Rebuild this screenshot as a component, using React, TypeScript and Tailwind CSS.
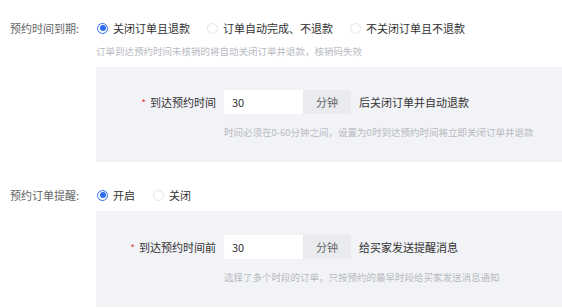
import React from "react";

const font = { fontFamily: '"Noto Sans CJK SC", "Noto Sans", sans-serif' };

function Radio({ checked, label }: { checked?: boolean; label: string }) {
  return (
    <label className="flex items-center gap-[5px] text-[11px] text-[#323233]">
      <span
        className={
          checked
            ? "w-[11px] h-[11px] rounded-full border border-[#2b6ef2] flex items-center justify-center bg-white"
            : "w-[11px] h-[11px] rounded-full border border-[#e3e4e8] bg-white"
        }
      >
        {checked && <span className="w-[6px] h-[6px] rounded-full bg-[#2b6ef2]" />}
      </span>
      <span>{label}</span>
    </label>
  );
}

function Field({ label, suffix, hint }: { label: string; suffix: string; hint: string }) {
  return (
    <div>
      <div className="flex items-center h-[24px]">
        <div className="w-[128px] flex justify-end items-center gap-[4px] pr-[8px] text-[11px] text-[#323233]">
          <span className="text-[#e0443e] text-[10px]">*</span>
          <span>{label}</span>
        </div>
        <div className="flex h-[24px]">
          <div className="w-[79px] bg-white pl-[8px] flex items-center text-[11px] text-[#323233]">30</div>
          <div className="w-[48px] bg-[#e9ebee] flex items-center justify-center text-[11px] text-[#646566]">分钟</div>
        </div>
        <span className="ml-[8px] text-[11px] text-[#323233]">{suffix}</span>
      </div>
      <div className="ml-[128px] mt-[11px] text-[9.5px] leading-[14px] text-[#b8babf]">{hint}</div>
    </div>
  );
}

export default function App() {
  return (
    <div className="w-[562px] h-[308px] bg-white overflow-hidden" style={font}>
      <div className="flex items-center h-[20px] mt-[18px]">
        <div className="w-[97px] pl-[10px] text-[11px] text-[#646566]">预约时间到期:</div>
        <div className="flex items-center gap-[17px]">
          <Radio checked label="关闭订单且退款" />
          <Radio label="订单自动完成、不退款" />
          <Radio label="不关闭订单且不退款" />
        </div>
      </div>
      <div className="ml-[96px] mt-[6px] text-[9.5px] leading-[14px] text-[#b8babf]">
        订单到达预约时间未核销的将自动关闭订单并退款，核销码失效
      </div>
      <div className="ml-[96px] mt-[9px] h-[95px] bg-[#f2f3f7] pt-[23px]">
        <Field
          label="到达预约时间"
          suffix="后关闭订单并自动退款"
          hint="时间必须在0-60分钟之间，设置为0时到达预约时间将立即关闭订单并退款"
        />
      </div>
      <div className="flex items-center h-[20px] mt-[23px]">
        <div className="w-[97px] pl-[10px] text-[11px] text-[#646566]">预约订单提醒:</div>
        <div className="flex items-center gap-[18px]">
          <Radio checked label="开启" />
          <Radio label="关闭" />
        </div>
      </div>
      <div className="ml-[96px] mt-[6px] h-[96px] bg-[#f2f3f7] pt-[24px]">
        <Field
          label="到达预约时间前"
          suffix="给买家发送提醒消息"
          hint="选择了多个时段的订单，只按预约的最早时段给买家发送消息通知"
        />
      </div>
    </div>
  );
}
